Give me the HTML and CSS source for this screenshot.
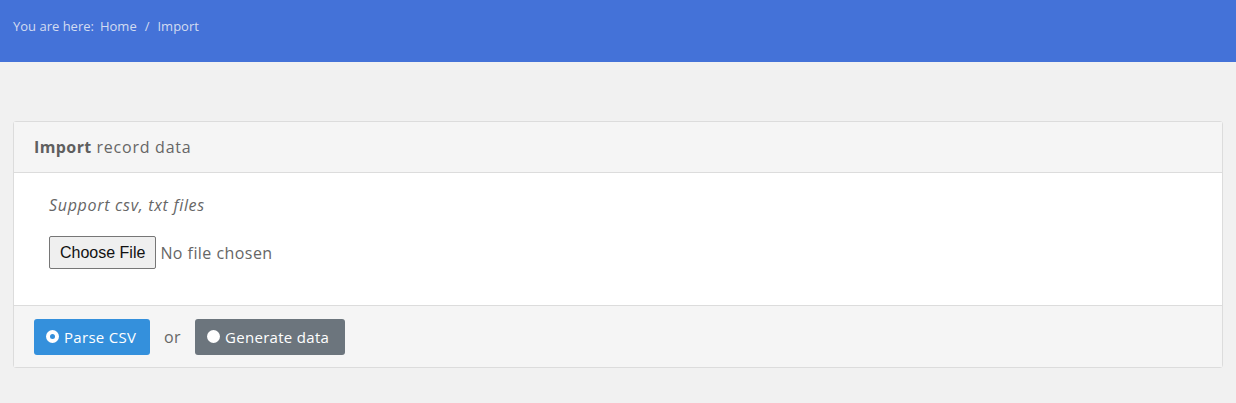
FILE: index.html
```html
<!DOCTYPE html>
<html>
<head>
<meta charset="utf-8">
<link rel="stylesheet" href="styles.css">
</head>
<body>
<header class="topbar">
  <nav class="crumbs">
    <span class="crumb-label">You are here:</span>
    <a class="crumb" href="#">Home</a>
    <span class="sep">/</span>
    <span class="crumb">Import</span>
  </nav>
</header>
<main class="content">
  <section class="card">
    <div class="card-header"><strong>Import</strong> record data</div>
    <div class="card-body">
      <p class="hint">Support csv, txt files</p>
      <div class="file-input">
        <span class="file-btn">Choose File</span>
        <span class="file-name">No file chosen</span>
      </div>
    </div>
    <div class="card-footer">
      <button class="btn btn-primary"><span class="radio dot"></span>Parse CSV</button>
      <span class="or">or</span>
      <button class="btn btn-secondary"><span class="radio full"></span>Generate data</button>
    </div>
  </section>
</main>
</body>
</html>
```

FILE: styles.css
```css
* { box-sizing: border-box; }
html, body { margin: 0; padding: 0; }
body {
  background: #f1f1f1;
  font-family: "Open Sans", "DejaVu Sans", sans-serif;
  color: #666;
  width: 1236px;
  height: 403px;
  overflow: hidden;
}
.topbar {
  background: #4472d8;
  height: 62px;
  padding: 17px 13px 0;
}
.crumbs {
  font-size: 13px;
  color: #d3dcf1;
  display: flex;
  align-items: center;
  line-height: 18px;
  white-space: nowrap;
}
.crumb-label { margin-right: 6px; }
.crumb { color: #d3dcf1; text-decoration: none; }
.sep { margin: 0 8px; }
.content {
  padding: 59px 13px 0;
}
.card {
  background: #fff;
  border: 1px solid #dcdcdc;
  border-radius: 3px;
  width: 1210px;
}
.card-header {
  background: #f5f5f5;
  border-bottom: 1px solid #dcdcdc;
  height: 51px;
  padding: 0 20px;
  display: flex;
  align-items: center;
  font-size: 16px;
  letter-spacing: 0.75px;
  color: #666;
  white-space: pre;
}
.card-header strong { color: #5f5f5f; font-weight: 700; letter-spacing: 0.4px; }
.card-body {
  height: 132px;
  padding: 21px 35px 0;
}
.hint {
  margin: 0 0 20px;
  font-style: italic;
  font-size: 16px;
  letter-spacing: 0.7px;
  line-height: 22px;
  color: #666;
}
.file-input { display: flex; align-items: center; }
.file-btn {
  font-family: "Liberation Sans", Arial, sans-serif;
  font-size: 16px;
  color: #111;
  background: #efefef;
  border: 1px solid #767676;
  border-radius: 2px;
  height: 33px;
  padding: 0 10px;
  display: flex;
  align-items: center;
}
.file-name { margin-left: 4px; font-size: 16px; letter-spacing: 0.45px; color: #666; }
.card-footer {
  background: #f5f5f5;
  border-top: 1px solid #dcdcdc;
  height: 62px;
  padding: 0 20px;
  display: flex;
  align-items: center;
}
.btn {
  border: 0;
  border-radius: 3px;
  height: 36px;
  padding: 0 12px;
  color: #fff;
  font-family: inherit;
  font-size: 15px;
  letter-spacing: 0.3px;
  display: flex;
  align-items: center;
  white-space: nowrap;
  cursor: pointer;
}
.btn-primary { background: #3490dc; width: 116px; }
.btn-secondary { background: #6c757d; width: 150px; }
.or { margin: 0 14px; font-size: 16px; letter-spacing: 0.3px; color: #666; width: 17px; }
.radio {
  width: 13px; height: 13px;
  border-radius: 50%;
  background: #fff;
  margin-right: 5px;
  position: relative;
  flex: none;
}
.radio.dot::after {
  content: "";
  position: absolute;
  left: 4px; top: 4px;
  width: 5px; height: 5px;
  border-radius: 50%;
  background: #3490dc;
}
```
